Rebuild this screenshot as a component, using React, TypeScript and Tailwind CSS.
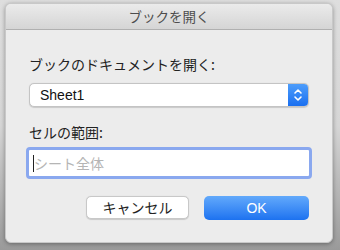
import React from 'react';

const font = { fontFamily: '"Noto Sans CJK JP", "Liberation Sans", sans-serif' };

export default function App() {
  return (
    <div
      className="w-[340px] h-[250px] bg-gradient-to-b from-[#dedede] via-[#d6d6d6] to-[#9a9a9a] pt-[3px] px-[5px] overflow-hidden"
      style={font}
    >
      <div className="w-[328px] h-[240px] rounded-[6px] bg-[#ececec] shadow-[0_1px_4px_rgba(0,0,0,0.35)] border border-[#c8c8c8] flex flex-col overflow-hidden">
        {/* title bar */}
        <div className="h-[26px] shrink-0 bg-gradient-to-b from-[#ebebeb] to-[#d5d5d5] border-b border-[#b0b0b0] flex items-center justify-center text-[13.5px] text-[#4d4d4d]">
          ブックを開く
        </div>

        <div className="flex flex-col px-[23px] pt-[26px]">
          <div className="text-[14px] text-[#222] leading-[16px]">ブックのドキュメントを開く:</div>

          <div className="mt-[11px] h-[24px] flex rounded-[5px] bg-white border border-[#c4c4c4] shadow-[0_0.5px_1px_rgba(0,0,0,0.15)] overflow-hidden">
            <div className="flex-1 flex items-center pl-[10px] text-[14px] text-[#111]" style={{ fontFamily: '"Liberation Sans", sans-serif' }}>
              Sheet1
            </div>
            <div className="w-[20px] bg-gradient-to-b from-[#4d9dfb] to-[#1a6ff0] flex items-center justify-center">
              <svg width="10" height="14" viewBox="0 0 10 14" fill="none" stroke="white" strokeWidth="1.6" strokeLinecap="round" strokeLinejoin="round">
                <path d="M2 5 L5 2 L8 5" />
                <path d="M2 9 L5 12 L8 9" />
              </svg>
            </div>
          </div>

          <div className="mt-[17px] text-[14px] text-[#222] leading-[16px]">セルの範囲:</div>

          <div className="mt-[7px] -mx-[3px] rounded-[4px] border-[3px] border-[#8aa8ef] bg-white h-[32px] flex items-center pl-[4px]">
            <div className="w-px h-[17px] bg-[#222]" />
            <span className="text-[14px] text-[#b5b5b5]">シート全体</span>
          </div>

          <div className="mt-[17px] flex justify-end gap-[15px]">
            <div className="w-[103px] h-[23px] rounded-[5px] bg-white border border-[#c8c8c8] shadow-[0_0.5px_1px_rgba(0,0,0,0.15)] flex items-center justify-center text-[14px] text-[#222]">
              キャンセル
            </div>
            <div className="w-[105px] h-[24px] rounded-[5px] bg-gradient-to-b from-[#62a9fb] to-[#1c72f0] flex items-center justify-center text-[14px] text-white" style={{ fontFamily: '"Liberation Sans", sans-serif' }}>
              OK
            </div>
          </div>
        </div>
      </div>
    </div>
  );
}
